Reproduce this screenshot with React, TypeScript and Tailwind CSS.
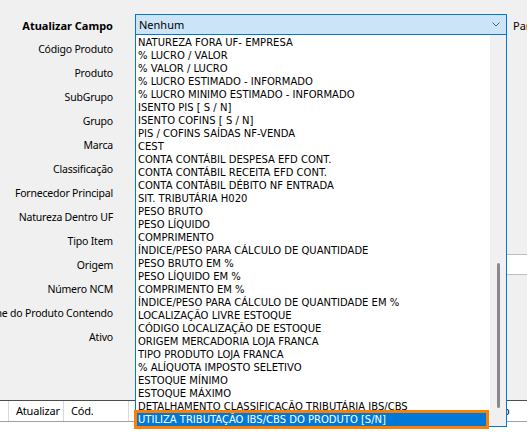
import React from "react";

const labels = [
  "Código Produto",
  "Produto",
  "SubGrupo",
  "Grupo",
  "Marca",
  "Classificação",
  "Fornecedor Principal",
  "Natureza Dentro UF",
  "Tipo Item",
  "Origem",
  "Número NCM",
  "Nome do Produto Contendo",
  "Ativo",
];

const campos = [
  "NATUREZA FORA UF- EMPRESA",
  "% LUCRO / VALOR",
  "% VALOR / LUCRO",
  "% LUCRO ESTIMADO - INFORMADO",
  "% LUCRO MINIMO ESTIMADO - INFORMADO",
  "ISENTO PIS [ S / N]",
  "ISENTO COFINS  [ S / N]",
  "PIS / COFINS SAÍDAS NF-VENDA",
  "CEST",
  "CONTA CONTÁBIL DESPESA EFD CONT.",
  "CONTA CONTÁBIL RECEITA EFD CONT.",
  "CONTA CONTÁBIL DÉBITO NF ENTRADA",
  "SIT. TRIBUTÁRIA H020",
  "PESO BRUTO",
  "PESO LÍQUIDO",
  "COMPRIMENTO",
  "ÍNDICE/PESO PARA CÁLCULO DE QUANTIDADE",
  "PESO BRUTO EM %",
  "PESO LÍQUIDO EM %",
  "COMPRIMENTO EM %",
  "ÍNDICE/PESO PARA CÁLCULO DE QUANTIDADE EM %",
  "LOCALIZAÇÃO LIVRE ESTOQUE",
  "CÓDIGO LOCALIZAÇÃO DE ESTOQUE",
  "ORIGEM MERCADORIA LOJA FRANCA",
  "TIPO PRODUTO LOJA FRANCA",
  "% ALÍQUOTA IMPOSTO SELETIVO",
  "ESTOQUE MÍNIMO",
  "ESTOQUE MÁXIMO",
  "DETALHAMENTO CLASSIFICAÇÃO TRIBUTÁRIA IBS/CBS",
  "UTILIZA TRIBUTAÇÃO IBS/CBS DO PRODUTO [S/N]",
];

const selected = campos.length - 1;

const Label = ({ text, bold }: { text: string; bold?: boolean }) => (
  <div
    className={`w-[113px] shrink-0 flex justify-end whitespace-nowrap pt-[4px] ${
      bold ? "font-bold" : "text-[10.5px] tracking-[-0.2px]"
    }`}
  >
    {text}
  </div>
);

const App = () => {
  return (
    <div className="relative w-[527px] h-[438px] overflow-hidden bg-[#f0f0f0] text-[11px] text-black font-['Noto_Sans',sans-serif]">
      {/* FILTER FORM */}
      <div className="h-[400px] pt-3 flex flex-col">
        <div className="flex h-6 items-center">
          <Label text="Atualizar Campo" bold />
          <div className="ml-[22px] w-[372px] h-[21px] shrink-0 flex items-center justify-between border border-[#0078d7] bg-[#cce4f7] pl-[3px] pr-[6px]">
            <span className="pt-[3px]">Nenhum</span>
            <svg width="8" height="5" viewBox="0 0 8 5" fill="none">
              <path d="M0.5 0.5 L4 4 L7.5 0.5" stroke="#606060" strokeWidth="1" />
            </svg>
          </div>
          <span className="ml-[6px] pt-[4px] whitespace-nowrap">Parâmetros</span>
        </div>
        {labels.map((l) => (
          <div key={l} className="flex h-6 items-center">
            <Label text={l} />
            {l === "Origem" && (
              <div className="ml-[22px] w-[420px] h-[21px] shrink-0 border border-[#bdbdbd] bg-white" />
            )}
          </div>
        ))}
      </div>

      {/* GRID HEADER */}
      <div className="h-[38px] border-t border-[#4d4d4d] bg-white">
        <div className="flex h-[21px] items-center border-b border-[#a0a0a0] whitespace-nowrap tracking-[-0.2px]">
          <div className="w-[9px] h-full border-r border-[#d9d9d9]" />
          <div className="w-[55px] h-full flex items-center pl-[7px] border-r border-[#d9d9d9]">
            Atualizar
          </div>
          <div className="w-[65px] h-full flex items-center pl-[7px] border-r border-[#d9d9d9]">
            Cód.
          </div>
          <div className="w-[338px] h-full border-r border-[#d9d9d9]" />
          <div className="h-full flex items-center pl-[2px]">Produto</div>
        </div>
      </div>

      {/* OPEN COMBO LIST */}
      <div className="absolute left-[135px] top-[34px] w-[372px] h-[393px] flex border border-[#0078d7] bg-white font-['DejaVu_Sans',sans-serif] text-[10px]">
        <div className="flex-1 pt-[1px] whitespace-nowrap">
          {campos.map((c, i) =>
            i === selected ? (
              <div
                key={c}
                className="h-[13px] leading-[13px] ml-[1px] mr-[4px] pl-[1px] bg-[#0078d7] text-white outline-3 outline-solid outline-[#ff8000]"
              >
                {c}
              </div>
            ) : (
              <div key={c} className="h-[13px] leading-[13px] pl-[2px]">
                {c}
              </div>
            )
          )}
        </div>
        <div className="w-4 bg-[#f0f0f0] flex justify-center pt-[228px]">
          <div className="w-[3px] h-[145px] rounded-full bg-[#8a8a8a]" />
        </div>
      </div>
    </div>
  );
};

export default App;
